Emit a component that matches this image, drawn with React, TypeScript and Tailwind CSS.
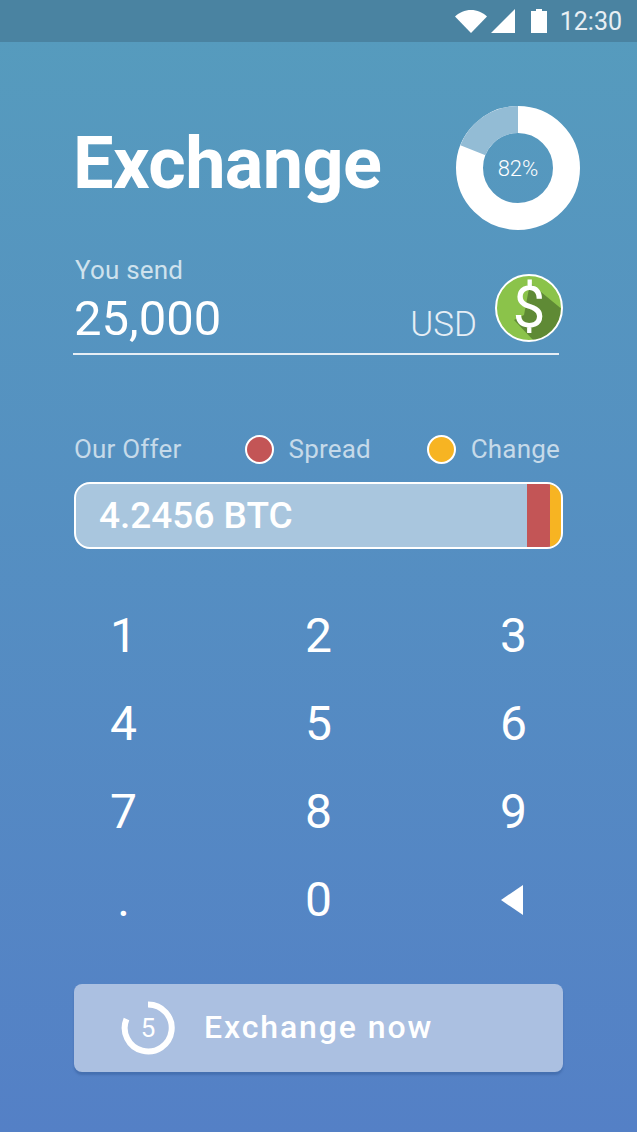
import { ChangeEvent } from 'react'

const keys = ['1', '2', '3', '4', '5', '6', '7', '8', '9', '.', '0']

function StatusBar() {
  return (
    <div className="flex h-[42px] items-center justify-end bg-[#4a83a1] pr-[15px] text-white">
      <svg width="32" height="24" viewBox="0 0 32 24" className="mr-[4px]">
        <path d="M0 7.500C4.300 3.500 9.800 1 16 1s11.700 2.500 16 6.500L16 24z" fill="#fff" />
      </svg>
      <svg width="24" height="24" viewBox="0 0 24 24" className="mr-[16px]">
        <path d="M0 24 24 0v24z" fill="#fff" />
      </svg>
      <svg width="16" height="24" viewBox="0 0 16 24" className="mr-[13px]">
        <path d="M5 0h6v2h5v22H0V2h5z" fill="#fff" />
      </svg>
      <span className="text-[25px] leading-none text-[#e8eff4]">12:30</span>
    </div>
  )
}

function Donut() {
  return (
    <div className="relative h-[124px] w-[124px]">
      <svg width="124" height="124" viewBox="0 0 124 124">
        <circle cx="62" cy="62" r="48.500" fill="none" stroke="#fff" strokeWidth="27" />
        <path d="M62 13.500A48.500 48.500 0 0 0 16.900 44.200" fill="none" stroke="#93bcd5" strokeWidth="27" />
      </svg>
      <span className="absolute inset-0 flex items-center justify-center text-[22px] font-light text-white">82%</span>
    </div>
  )
}

function Coin() {
  return (
    <svg width="68" height="68" viewBox="0 0 68 68" className="block">
      <clipPath id="coin-clip">
        <circle cx="34" cy="34" r="33" />
      </clipPath>
      <circle cx="34" cy="34" r="33" fill="#8bc34a" />
      <path d="M35 9 68 36v32H40L19 46l10-5z" fill="#5f8a35" clipPath="url(#coin-clip)" />
      <circle cx="34" cy="34" r="33" fill="none" stroke="#fff" strokeWidth="2" />
      <text x="34" y="53" textAnchor="middle" fontSize="58" fill="#fff" fontFamily="Roboto, sans-serif">$</text>
    </svg>
  )
}

function Timer() {
  return (
    <div className="relative h-[54px] w-[54px]">
      <svg width="54" height="54" viewBox="0 0 54 54">
        <path d="M27 3.500A23.500 23.500 0 1 1 5.500 18" fill="none" stroke="#fff" strokeWidth="6" />
      </svg>
      <span className="absolute inset-0 flex items-center justify-center text-[26px] text-white">5</span>
    </div>
  )
}

export default function App() {
  const onChange = (_e: ChangeEvent<HTMLInputElement>) => {}

  return (
    <div className="h-[1132px] w-[637px] overflow-hidden bg-gradient-to-b from-[#569cbd] to-[#5480c6] font-['Roboto',sans-serif]">
      <StatusBar />

      <div className="pl-[74px] pr-[74px]">
        <div className="mr-[-17px] mt-[64px] flex h-[124px] items-center justify-between">
          <h1 className="ml-[-1px] pb-[8px] text-[72px] font-bold leading-none tracking-[-0.6px] text-white">Exchange</h1>
          <Donut />
        </div>

        <div className="ml-[1px] mt-[25px] text-[26px] leading-[30px] tracking-[0.2px] text-[#cfe2ed]">You send</div>
        <div className="ml-[-1px] mr-[4px] flex h-[70px] items-end border-b-2 border-[#e6eef5] pb-[7px]">
          <input
            value="25,000"
            onChange={onChange}
            className="ml-[1px] h-[56px] w-[200px] bg-transparent text-[49px] leading-none text-white outline-none"
          />
          <span className="mb-[2px] ml-auto mr-[82px] text-[35px] font-light leading-[38px] text-[#e6eef5]">USD</span>
        </div>
        <div className="relative">
          <div className="absolute right-0 top-[-81px]">
            <Coin />
          </div>
        </div>

        <div className="mt-[78px] flex h-[32px] items-center text-[26px] tracking-[0.2px] text-[#c6dae9]">
          <span>Our Offer</span>
          <span className="ml-[63px] h-[29px] w-[29px] rounded-full border-2 border-white bg-[#c35556]" />
          <span className="ml-[15px]">Spread</span>
          <span className="ml-auto h-[29px] w-[29px] rounded-full border-2 border-white bg-[#f7b422]" />
          <span className="ml-[15px] mr-[3px]">Change</span>
        </div>

        <div className="mt-[17px] flex h-[67px] overflow-hidden rounded-[16px] border-2 border-white bg-[#a9c6de]">
          <div className="flex flex-1 items-center pl-[23px] text-[37px] font-medium text-white">4.2456 BTC</div>
          <div className="w-[23px] bg-[#c35556]" />
          <div className="w-[11px] bg-[#f7b422]" />
        </div>

        <div className="ml-[-48px] mr-[-48px] mt-[43px] grid grid-cols-3">
          {keys.map((k) => (
            <div key={k} className="flex h-[88px] items-center justify-center text-[48px] leading-none text-white">
              {k}
            </div>
          ))}
          <div className="flex h-[88px] items-center justify-center">
            <svg width="22" height="30" viewBox="0 0 22 30" className="mr-[3px]">
              <path d="M22 0v30L0 15z" fill="#fff" />
            </svg>
          </div>
        </div>

        <button className="mt-[40px] flex h-[88px] w-full items-center rounded-[8px] bg-[#abc0e1] pl-[47px] shadow-[0_3px_2px_rgba(50,90,150,0.45)]">
          <Timer />
          <span className="ml-[29px] pb-[2px] text-[32px] font-medium tracking-[1.9px] text-white">Exchange now</span>
        </button>
      </div>
    </div>
  )
}
